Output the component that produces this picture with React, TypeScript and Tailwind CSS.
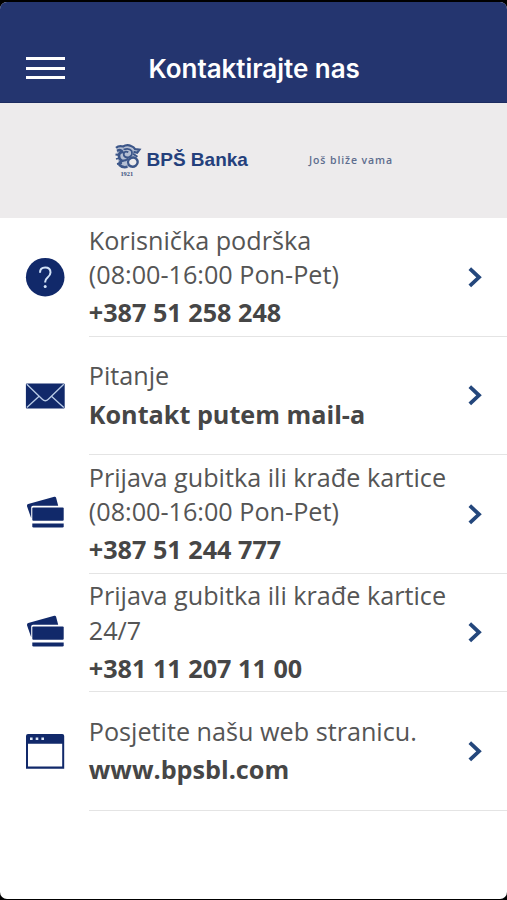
import type { ReactNode } from "react";

type Contact = {
  icon: ReactNode;
  lines: string[];
  value: string;
};

function HelpIcon() {
  return (
    <svg width="40" height="40" viewBox="0 0 40 40" fill="none">
      <circle cx="20.2" cy="20.2" r="19.3" fill="#11296a" />
      <path
        d="M15 15.8c0-3.3 2.1-5.2 5.2-5.2s5.3 1.9 5.3 4.9c0 2.3-1.2 3.5-2.9 4.9-1.7 1.4-2.4 2.3-2.4 4.4v.8"
        stroke="#d3e3f8"
        strokeWidth="2"
      />
      <circle cx="20.2" cy="29.5" r="1.5" fill="#d3e3f8" />
    </svg>
  );
}

function MailIcon() {
  return (
    <svg width="40" height="40" viewBox="0 0 40 40" fill="none">
      <rect x="0.9" y="7.4" width="38.8" height="25" rx="1" fill="#11296a" />
      <path
        d="M1.8 8.2 17.3 23.3q3 2.8 6 0L38.8 8.2M1.8 31.6l12.3-11.4M38.8 31.6 26.5 20.2"
        stroke="#b9cbe6"
        strokeWidth="1.3"
      />
    </svg>
  );
}

function CardsIcon() {
  return (
    <svg width="40" height="40" viewBox="0 0 40 40" fill="none">
      <path
        d="M3.2 10 29.3 2.8q1.4-.4 1.8 1l2.1 8H8q-1.8 0-1.8 1.8v10.6L2 12.2q-.3-1.7 1.2-2.2Z"
        fill="#11296a"
      />
      <rect x="7.3" y="13.4" width="31.4" height="13.3" rx="1" fill="#11296a" />
      <path d="M7.3 29.6h31.4v2.7q0 1.2-1.2 1.2h-29q-1.2 0-1.2-1.2Z" fill="#11296a" />
    </svg>
  );
}

function BrowserIcon() {
  return (
    <svg width="40" height="40" viewBox="0 0 40 40" fill="none">
      <path
        d="M3 3h34.2q2 0 2 2v32.8H1V5q0-2 2-2Zm0 9.7v22.9h34.2V12.7Z"
        fill="#11296a"
        fillRule="evenodd"
      />
      <path d="M5 6.4h2.6V9H5zM10.7 6.4h2.6V9h-2.6zM16.4 6.4H19V9h-2.6z" fill="#dce6f5" />
    </svg>
  );
}

function Chevron() {
  return (
    <svg width="14" height="22" viewBox="0 0 14 22" fill="none">
      <path d="M1.8 2.7 11 11.3l-9.2 8.6" stroke="#24477c" strokeWidth="3.8" />
    </svg>
  );
}

// Dragon emblem with the founding year under it
function Emblem() {
  return (
    <svg width="28" height="34" viewBox="0 0 28 34" fill="none" stroke="#3c5689">
      <path
        d="M3 4q3-3 7-2 4-2 8 0 3 1 4 3l4.5.6-2 3.2-3.5-.3q2 4 2.5 7-2 7-8 8H9q-6-3-5-9Q2 9 3 4Z"
        fill="#b5bfd3"
        stroke="none"
      />
      <path d="M2 3.8Q5 1.2 9 2.5q4-2.5 8-.5 3 1 4 3l4.5.6-2.4 3.2-3.6-1" strokeWidth="2.2" />
      <path d="M3 6.8q4-2 5.5 1.2Q5 8 5 11.8t3 5q-3 1.5-2.5 4.2 3 3 8 1.8" strokeWidth="2.5" />
      <path d="M1.5 10.5l4 .5M2 15l3.8-1M3 20l5-1" strokeWidth="1.8" />
      <path d="M9.5 5.5q6-1.8 8.2 1.6 1.5 5-3.7 6.4-4.5 0-4.3-4 1.5-3 4.6-1.2" strokeWidth="1.8" />
      <path d="M14.5 16q3.5-4 7.4-1.6 3.6 3.6.1 7.1-3.8 2.8-7.3-.6-1.4-2.6-.2-4.9Z" fill="#edebec" strokeWidth="2.3" />
      <path d="M8 16.8q4 0 6.5-2.3M19 9.8l4.5 3" strokeWidth="1.9" />
      <text
        x="12.8"
        y="32"
        textAnchor="middle"
        fontSize="6.4"
        fontWeight="700"
        fontFamily="Liberation Serif, serif"
        fill="#3c527f"
        stroke="none"
      >
        1921
      </text>
    </svg>
  );
}

const contacts: Contact[] = [
  {
    icon: <HelpIcon />,
    lines: ["Korisnička podrška", "(08:00-16:00 Pon-Pet)"],
    value: "+387 51 258 248",
  },
  {
    icon: <MailIcon />,
    lines: ["Pitanje"],
    value: "Kontakt putem mail-a",
  },
  {
    icon: <CardsIcon />,
    lines: ["Prijava gubitka ili krađe kartice", "(08:00-16:00 Pon-Pet)"],
    value: "+387 51 244 777",
  },
  {
    icon: <CardsIcon />,
    lines: ["Prijava gubitka ili krađe kartice", "24/7"],
    value: "+381 11 207 11 00",
  },
  {
    icon: <BrowserIcon />,
    lines: ["Posjetite našu web stranicu."],
    value: "www.bpsbl.com",
  },
];

export default function App() {
  return (
    <div className="h-[900px] w-[507px] bg-black pt-[1.5px] pb-px font-['Open_Sans',sans-serif]">
      <div className="flex h-full flex-col overflow-hidden rounded-[7px] bg-white">
        <header className="flex h-[101.5px] shrink-0 items-end border-b border-[#1c2b60] bg-[#24356f] pb-[16px] pl-[26px]">
          <button className="mb-[7px] flex w-[39px] flex-col gap-[6.5px]">
            <span className="h-[3px] bg-white" />
            <span className="h-[3px] bg-white" />
            <span className="h-[3px] bg-white" />
          </button>
          <h1 className="ml-[83.5px] font-['Inter',sans-serif] text-[26px] leading-[34px] font-semibold tracking-[-0.03px] whitespace-nowrap text-white">
            Kontaktirajte nas
          </h1>
        </header>

        <div className="flex h-[115px] shrink-0 items-center bg-[#edebec] pl-[114px]">
          <Emblem />
          <span className="ml-[4.5px] w-[102.5px] font-['Liberation_Sans',sans-serif] text-[19px] font-bold whitespace-nowrap text-[#24407c]">
            BPŠ Banka
          </span>
          <span className="ml-[60px] text-[10.5px] font-semibold tracking-[0.9px] whitespace-nowrap text-[#5d6d8e]">
            Još bliže vama
          </span>
        </div>

        <ul>
          {contacts.map((contact, i) => (
            <li key={i} className="flex h-[118.5px] items-center pl-[25px]">
              <div className="w-[63.8px] shrink-0">{contact.icon}</div>
              <div className="flex h-full grow items-center border-b border-[#e4e4e4] pr-[25px]">
                <div className="grow pb-[1px] text-[25.2px] leading-[34.3px] whitespace-nowrap text-[#555555]">
                  {contact.lines.map((line) => (
                    <p key={line}>{line}</p>
                  ))}
                  <p className="mt-1 text-[25.2px] font-bold text-[#464646]">{contact.value}</p>
                </div>
                <Chevron />
              </div>
            </li>
          ))}
        </ul>
      </div>
    </div>
  );
}
